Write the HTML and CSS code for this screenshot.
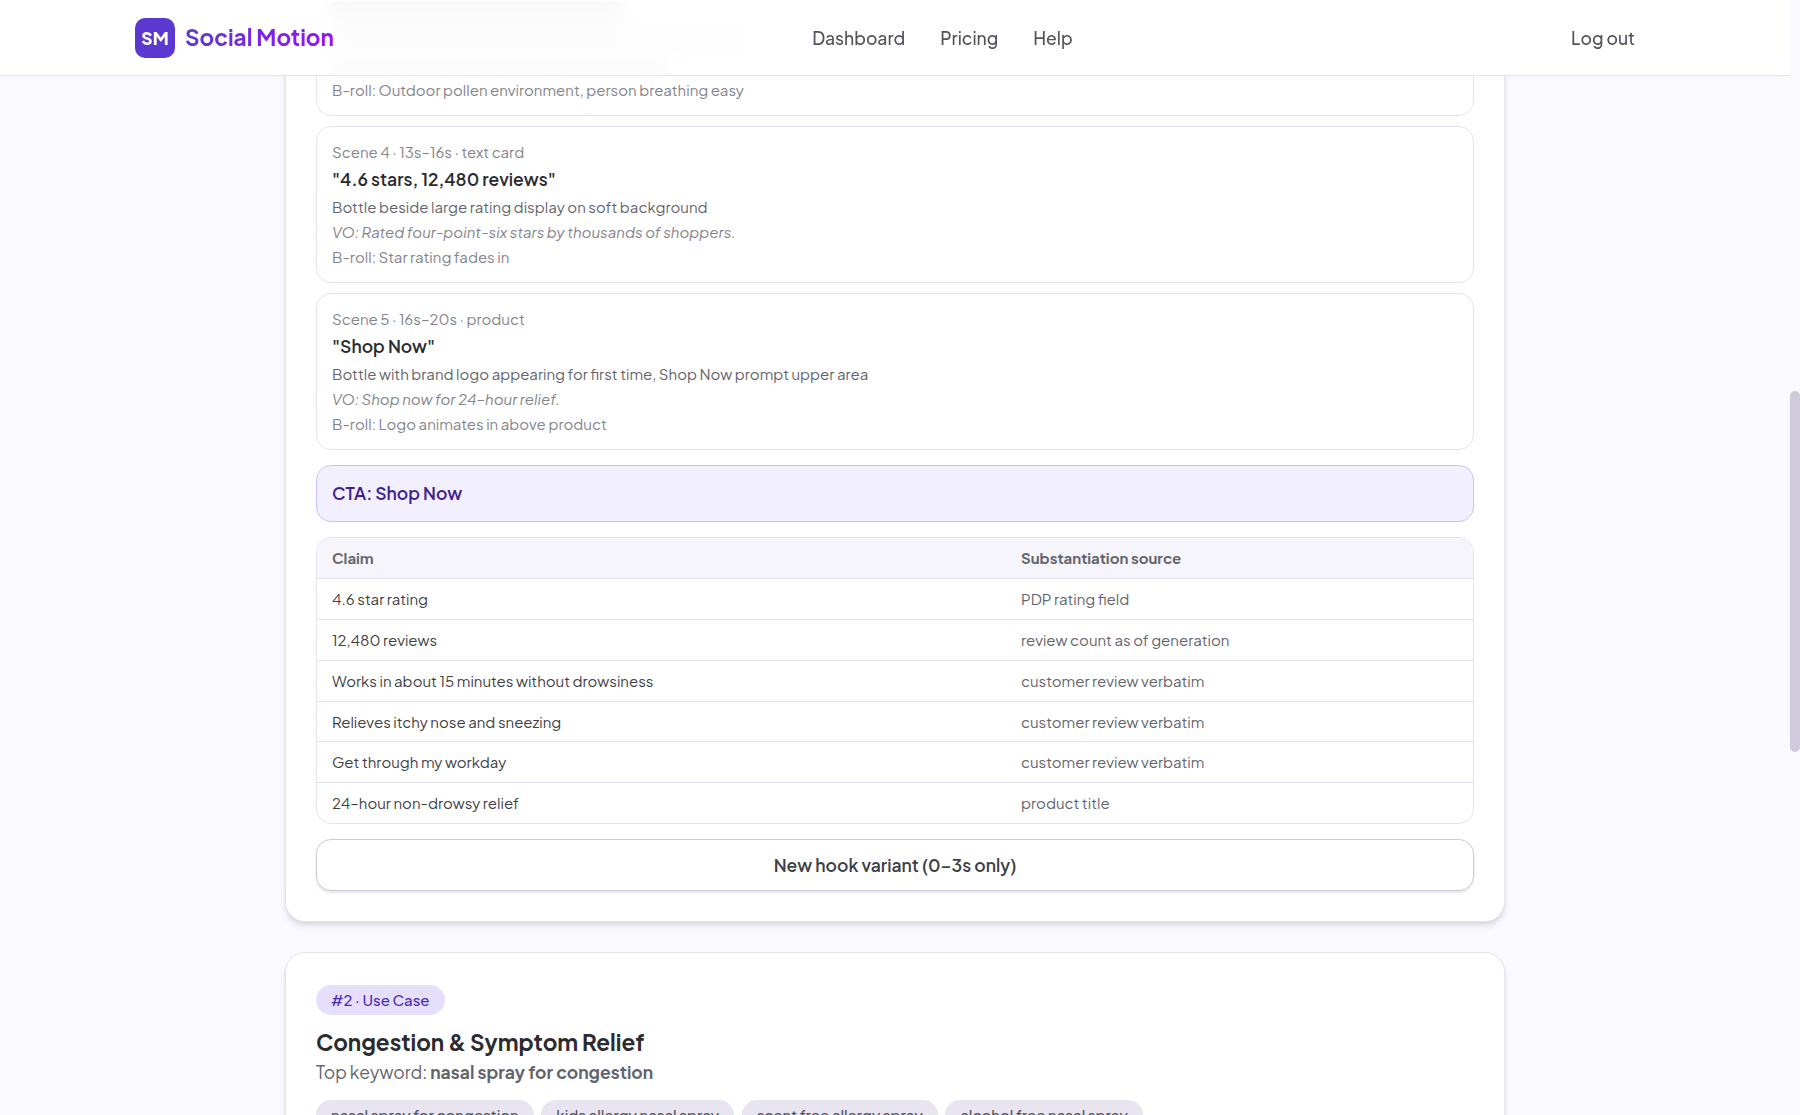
FILE: index.html
```html
<!DOCTYPE html>
<html lang="en">
<head>
  <meta charset="UTF-8" />
  <meta name="viewport" content="width=device-width, initial-scale=1.0" />
  <title>Social Motion</title>
  <link rel="stylesheet" href="styles.css">
</head>
<body>
  <!-- Header -->
  <header class="header">
    <div class="header-inner">
      <a class="brand" href="#">
        <span class="brand-logo">SM</span>
        <span class="brand-name">Social Motion</span>
      </a>
      <nav class="nav">
        <a href="#">Dashboard</a>
        <a href="#">Pricing</a>
        <a href="#">Help</a>
      </nav>
      <div class="account">
        <a href="#">Log out</a>
      </div>
    </div>
  </header>

  <main class="content">
    <!-- Concept 1 -->
    <section class="card card-first">
      <div class="scenes">
        <div class="scene scene-scrolled">
          <div class="line line-title"></div>
          <div class="line line-visual"></div>
          <div class="line line-vo"></div>
          <p class="scene-broll">B-roll: Outdoor pollen environment, person breathing easy</p>
        </div>
        <div class="scene">
          <p class="scene-meta">Scene 4 · 13s–16s · text card</p>
          <p class="scene-title">"4.6 stars, 12,480 reviews"</p>
          <p class="scene-visual">Bottle beside large rating display on soft background</p>
          <p class="scene-vo">VO: Rated four-point-six stars by thousands of shoppers.</p>
          <p class="scene-broll">B-roll: Star rating fades in</p>
        </div>
        <div class="scene">
          <p class="scene-meta">Scene 5 · 16s–20s · product</p>
          <p class="scene-title">"Shop Now"</p>
          <p class="scene-visual">Bottle with brand logo appearing for first time, Shop Now prompt upper area</p>
          <p class="scene-vo">VO: Shop now for 24–hour relief.</p>
          <p class="scene-broll">B-roll: Logo animates in above product</p>
        </div>
      </div>

      <div class="cta">CTA: Shop Now</div>

      <!-- Claims -->
      <div class="claims">
        <div class="claims-row claims-head"><span>Claim</span><span>Substantiation source</span></div>
        <div class="claims-row"><span>4.6 star rating</span><span class="source">PDP rating field</span></div>
        <div class="claims-row"><span>12,480 reviews</span><span class="source">review count as of generation</span></div>
        <div class="claims-row"><span>Works in about 15 minutes without drowsiness</span><span class="source">customer review verbatim</span></div>
        <div class="claims-row"><span>Relieves itchy nose and sneezing</span><span class="source">customer review verbatim</span></div>
        <div class="claims-row"><span>Get through my workday</span><span class="source">customer review verbatim</span></div>
        <div class="claims-row"><span>24–hour non-drowsy relief</span><span class="source">product title</span></div>
      </div>

      <button class="hook-btn">New hook variant (0–3s only)</button>
    </section>

    <!-- Concept 2 -->
    <section class="card card-second">
      <span class="badge">#2 · Use Case</span>
      <h2>Congestion &amp; Symptom Relief</h2>
      <p class="keyword">Top keyword: <strong>nasal spray for congestion</strong></p>
      <div class="chips">
        <span class="chip">nasal spray for congestion</span>
        <span class="chip">kids allergy nasal spray</span>
        <span class="chip">scent free allergy spray</span>
        <span class="chip">alcohol free nasal spray</span>
      </div>
    </section>
  </main>

  <div class="scrollbar"></div>
</body>
</html>
```
FILE: styles.css
```css
/* Global Styles */
* {
  box-sizing: border-box;
}
body {
  margin: 0;
  height: 1115px;
  padding-right: 10px;
  overflow: hidden;
  font-family: "Plus Jakarta Sans", Inter, "Open Sans", sans-serif;
  font-size: 15px;
  line-height: 20px;
  background-color: #faf9ff;
  color: #3f3f46;
}
p, h2 {
  margin: 0;
}
a {
  color: inherit;
  text-decoration: none;
}
/* Header */
.header {
  position: sticky;
  top: 0;
  z-index: 10;
  height: 76px;
  border-bottom: 1px solid #e5e3ee;
  background-color: rgba(255, 255, 255, 0.95);
  backdrop-filter: blur(12px);
}
.header-inner {
  display: flex;
  align-items: center;
  justify-content: space-between;
  width: 1520px;
  height: 75px;
  margin: 0 auto;
}
.brand {
  display: flex;
  align-items: center;
  gap: 10px;
}
.brand-logo {
  display: flex;
  align-items: center;
  justify-content: center;
  width: 40px;
  height: 40px;
  border-radius: 10px;
  background-color: #5b39d0;
  color: #fff;
  font-size: 17.5px;
  font-weight: 800;
}
.brand-name {
  font-size: 22.5px;
  font-weight: 700;
  line-height: 35px;
  background: linear-gradient(to right, #5b39d0, #9810fa);
  background-clip: text;
  -webkit-background-clip: text;
  color: transparent;
}
.nav {
  display: flex;
  gap: 35px;
}
.nav, .account {
  padding-top: 1px;
  font-size: 17.5px;
  font-weight: 500;
  line-height: 25px;
  color: #52525b;
}
.account {
  padding-left: 20px;
  padding-right: 20px;
}
/* Cards */
.content {
  width: 1220px;
  margin: 0 auto;
}
.card {
  padding: 30px;
  border: 1px solid #e5e3ee;
  border-radius: 20px;
  background-color: #fff;
  box-shadow: 0 5px 7.5px -1px rgba(0, 0, 0, 0.1), 0 2.5px 5px -2.5px rgba(0, 0, 0, 0.1);
}
.card-first {
  margin-top: -148px;
}
.card-second {
  height: 400px;
  margin-top: 30px;
  padding-top: 32px;
}
/* Scenes */
.scenes {
  display: flex;
  flex-direction: column;
  gap: 10px;
}
.scene {
  display: flex;
  flex-direction: column;
  gap: 5px;
  padding: 15px;
  border: 1px solid #e5e3ee;
  border-radius: 15px;
}
.scene-scrolled {
  height: 157px;
  justify-content: flex-end;
}
.scene-meta, .scene-vo, .scene-broll {
  color: #84848c;
}
.scene-title {
  font-size: 17.5px;
  font-weight: 600;
  line-height: 25px;
  color: #2b2b30;
}
.scene-visual {
  color: #64646c;
}
.scene-vo {
  font-style: italic;
}
/* Lines sitting behind the translucent header */
.line {
  height: 14px;
  margin: 3px 0;
  background-color: #a0a0a4;
}
.line-title {
  width: 288px;
  height: 20px;
  background-color: #6e6e72;
}
.line-visual {
  width: 412px;
}
.line-vo {
  width: 336px;
}
/* Call to action */
.cta {
  margin-top: 15px;
  padding: 15px;
  border: 1px solid #c9c2f9;
  border-radius: 15px;
  background-color: #f2effe;
  color: #3f1f8f;
  font-size: 17.5px;
  font-weight: 600;
  line-height: 25px;
}
/* Claims */
.claims {
  height: 287px;
  margin-top: 15px;
  border: 1px solid #e5e3ee;
  border-radius: 15px;
  overflow: hidden;
}
.claims-row {
  display: grid;
  grid-template-columns: 689px 1fr;
  height: 40.88px;
  border-bottom: 1px solid #e5e3ee;
}
.claims-row:last-child {
  border-bottom: none;
}
.claims-row span {
  padding: 10px 15px;
}
.claims-head {
  background-color: #f6f5fb;
  color: #64646c;
  font-weight: 700;
}
.source {
  color: #64646c;
}
.hook-btn {
  display: block;
  width: 100%;
  margin-top: 15px;
  padding: 12.5px 20px;
  height: 52px;
  border: 1px solid #cfcbdd;
  border-radius: 15px;
  background-color: #fff;
  box-shadow: 0 1.25px 2.5px rgba(0, 0, 0, 0.1);
  color: #3f3f46;
  font-family: inherit;
  font-size: 17.5px;
  font-weight: 600;
  line-height: 25px;
}
/* Badge, title and keywords */
.badge {
  display: block;
  width: fit-content;
  padding: 5px 15px;
  border-radius: 15px;
  background-color: #e5dffc;
  color: #4c2db0;
  font-weight: 500;
}
.card h2 {
  margin-top: 10px;
  font-size: 22.5px;
  font-weight: 700;
  line-height: 35px;
  color: #2b2b30;
}
.keyword {
  font-size: 17.5px;
  line-height: 25px;
  color: #64646c;
}
.chips {
  display: flex;
  gap: 7.5px;
  margin-top: 15px;
}
.chip {
  padding: 5px 15px;
  border-radius: 15px;
  background-color: #e8e4f0;
  color: #52525b;
  font-weight: 500;
}
/* Page scrollbar */
.scrollbar {
  position: fixed;
  top: 391px;
  right: 0;
  width: 10px;
  height: 361px;
  border-radius: 5px;
  background-color: #cfcbdd;
}
```
